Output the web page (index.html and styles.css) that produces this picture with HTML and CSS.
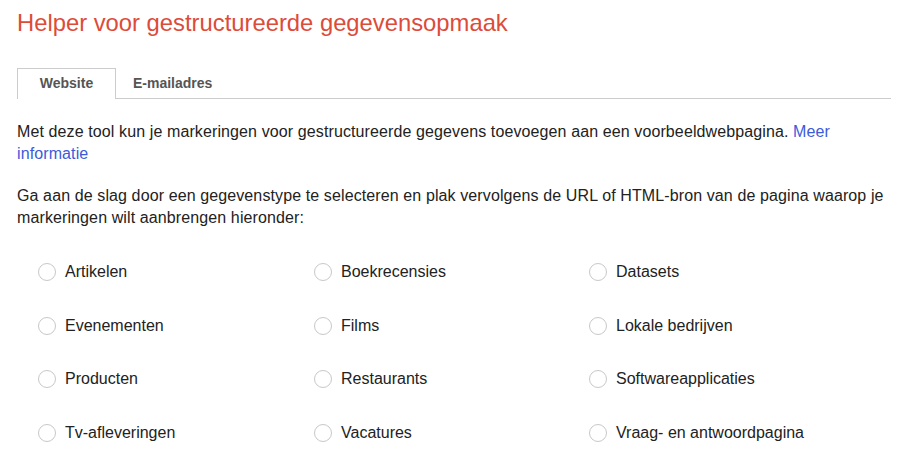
FILE: index.html
```html
<!DOCTYPE html>
<html lang="nl">
<head>
<meta charset="utf-8">
<title>Helper voor gestructureerde gegevensopmaak</title>
<link rel="stylesheet" href="styles.css">
</head>
<body>
<div class="page">
  <h1 class="title">Helper voor gestructureerde gegevensopmaak</h1>
  <div class="tabs">
    <div class="tab tab-active">Website</div>
    <div class="tab">E-mailadres</div>
  </div>
  <p class="text">Met deze tool kun je markeringen voor gestructureerde gegevens toevoegen aan een voorbeeldwebpagina. <a class="link" href="#">Meer informatie</a></p>
  <p class="text">Ga aan de slag door een gegevenstype te selecteren en plak vervolgens de URL of HTML-bron van de pagina waarop je markeringen wilt aanbrengen hieronder:</p>
  <div class="options">
    <label class="option"><span class="radio"></span>Artikelen</label>
    <label class="option"><span class="radio"></span>Boekrecensies</label>
    <label class="option"><span class="radio"></span>Datasets</label>
    <label class="option"><span class="radio"></span>Evenementen</label>
    <label class="option"><span class="radio"></span>Films</label>
    <label class="option"><span class="radio"></span>Lokale bedrijven</label>
    <label class="option"><span class="radio"></span>Producten</label>
    <label class="option"><span class="radio"></span>Restaurants</label>
    <label class="option"><span class="radio"></span>Softwareapplicaties</label>
    <label class="option"><span class="radio"></span>Tv-afleveringen</label>
    <label class="option"><span class="radio"></span>Vacatures</label>
    <label class="option"><span class="radio"></span>Vraag- en antwoordpagina</label>
  </div>
</div>
</body>
</html>
```
FILE: styles.css
```css
html, body {
  margin: 0;
  padding: 0;
  background: #fff;
}
body {
  font-family: "Liberation Sans", Arial, sans-serif;
  color: #222;
}
.page {
  padding: 0 26px 0 17px;
}
.title {
  margin: 0;
  padding-top: 9px;
  font-size: 23.8px;
  font-weight: normal;
  line-height: 28px;
  color: #dd4b39;
}
.tabs {
  display: flex;
  margin-top: 31px;
  border-bottom: 1px solid #ccc;
  height: 30px;
}
.tab {
  font-size: 14px;
  font-weight: bold;
  color: #555;
  line-height: 28px;
  padding: 0 16px;
  border: 1px solid transparent;
  border-bottom: none;
}
.tab-active {
  width: 65px;
  text-align: center;
  border-color: #ccc;
  background: #fff;
  margin-bottom: -1px;
  height: 30px;
}
.text {
  margin: 0;
  margin-top: 22px;
  font-size: 16px;
  line-height: 22px;
  letter-spacing: 0.11px;
}
.text + .text {
  margin-top: 20px;
}
.link {
  color: #3b5bdb;
  text-decoration: none;
}
.options {
  display: grid;
  grid-template-columns: 276px 275px 1fr;
  grid-auto-rows: 53.7px;
  padding-left: 21px;
  margin-top: 32px;
}
.option {
  display: flex;
  align-items: center;
  font-size: 16px;
  height: 22px;
}
.radio {
  width: 16px;
  height: 16px;
  border: 1px solid #c8c8c8;
  border-radius: 50%;
  margin-right: 9px;
  flex: none;
}
```
